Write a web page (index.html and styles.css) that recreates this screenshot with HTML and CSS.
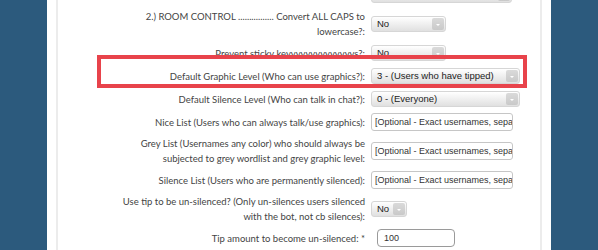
FILE: index.html
```html
<!DOCTYPE html>
<html>
<head>
<meta charset="utf-8">
<link rel="stylesheet" href="styles.css">
</head>
<body>
<div class="page">
  <div class="panel">
    <form class="form">
      <div class="row">
        <span class="label"></span>
        <div class="select w141"><span class="val"></span><span class="arrow"></span></div>
      </div>
      <div class="row">
        <span class="label">2.) ROOM CONTROL ................ Convert ALL CAPS to<br>lowercase?:</span>
        <div class="select w75"><span class="val">No</span><span class="arrow"></span></div>
      </div>
      <div class="row">
        <span class="label">Prevent sticky keyyyyyyyyyyyyyys?:</span>
        <div class="select w75"><span class="val">No</span><span class="arrow"></span></div>
      </div>
      <div class="row">
        <span class="label">Default Graphic Level (Who can use graphics?):</span>
        <div class="select w149"><span class="val">3 - (Users who have tipped)</span><span class="arrow"></span></div>
      </div>
      <div class="row">
        <span class="label">Default Silence Level (Who can talk in chat?):</span>
        <div class="select w149"><span class="val">0 - (Everyone)</span><span class="arrow"></span></div>
      </div>
      <div class="row">
        <span class="label">Nice List (Users who can always talk/use graphics):</span>
        <div class="input w142">[Optional - Exact usernames, separated by commas]</div>
      </div>
      <div class="row">
        <span class="label">Grey List (Usernames any color) who should always be<br>subjected to grey wordlist and grey graphic level:</span>
        <div class="input w142">[Optional - Exact usernames, separated by commas]</div>
      </div>
      <div class="row">
        <span class="label">Silence List (Users who are permanently silenced):</span>
        <div class="input w142">[Optional - Exact usernames, separated by commas]</div>
      </div>
      <div class="row">
        <span class="label">Use tip to be un-silenced? (Only un-silences users silenced<br>with the bot, not cb silences):</span>
        <div class="select w36"><span class="val">No</span><span class="arrow"></span></div>
      </div>
      <div class="row">
        <span class="label">Tip amount to become un-silenced: *</span>
        <div class="input num">100</div>
      </div>
    </form>
  </div>
</div>
<div class="highlight"></div>
</body>
</html>
```
FILE: styles.css
```css
html, body {
  margin: 0;
  padding: 0;
  height: 100%;
  overflow: hidden;
}
body {
  background: #2c5a7d;
  font-family: Lato, "Open Sans", sans-serif;
}
.page {
  margin-left: 47px;
  width: 504px;
  height: 100%;
  background: #fff;
  padding: 0 9px;
  box-sizing: border-box;
}
.panel {
  height: 100%;
  border-left: 2px solid #ececec;
  border-right: 2px solid #ececec;
  overflow: hidden;
}
.form {
  margin-top: -14px;
  display: flex;
  flex-direction: column;
  gap: 5px;
}
.row {
  display: grid;
  grid-template-columns: 307px auto;
  column-gap: 6px;
  align-items: center;
  min-height: 18px;
}
.label {
  text-align: right;
  font-size: 9.5px;
  line-height: 15px;
  color: #444;
  white-space: nowrap;
}
.select {
  position: relative;
  height: 16px;
  box-sizing: border-box;
  border: 1px solid #d6d6d6;
  border-radius: 3px;
  background: linear-gradient(#ffffff, #e0e0e0);
  font-family: "Liberation Sans", Arial, sans-serif;
  font-size: 9.5px;
  line-height: 14px;
  color: #222;
  display: flex;
  justify-content: space-between;
  align-items: stretch;
  overflow: hidden;
}
.select .val {
  padding-left: 5px;
  white-space: nowrap;
}
.select .arrow {
  width: 12px;
  margin: 1px;
  border-radius: 2px;
  background: linear-gradient(#dadada, #c9c9c9);
  position: relative;
}
.select .arrow::after {
  content: "";
  position: absolute;
  left: 4px;
  top: 6px;
  border-left: 2px solid transparent;
  border-right: 2px solid transparent;
  border-top: 2px solid #fff;
}
.w141 { width: 141px; }
.w149 { width: 149px; }
.w75 { width: 75px; }
.w36 { width: 36px; }
.w142 { width: 142px; }
.input {
  height: 18px;
  box-sizing: border-box;
  border: 1px solid #c6c6c6;
  border-radius: 3px;
  background: #fff;
  font-family: "Liberation Sans", Arial, sans-serif;
  font-size: 9px;
  line-height: 16px;
  color: #333;
  padding-left: 3px;
  white-space: nowrap;
  overflow: hidden;
}
.input.num {
  width: 78px;
  margin-left: 6px;
  border-color: #9a9a9a;
  border-radius: 4px;
  padding-left: 6px;
}
.highlight {
  position: absolute;
  left: 97px;
  top: 55px;
  width: 430px;
  height: 33px;
  box-sizing: border-box;
  border: 4px solid #e8434b;
}
```
